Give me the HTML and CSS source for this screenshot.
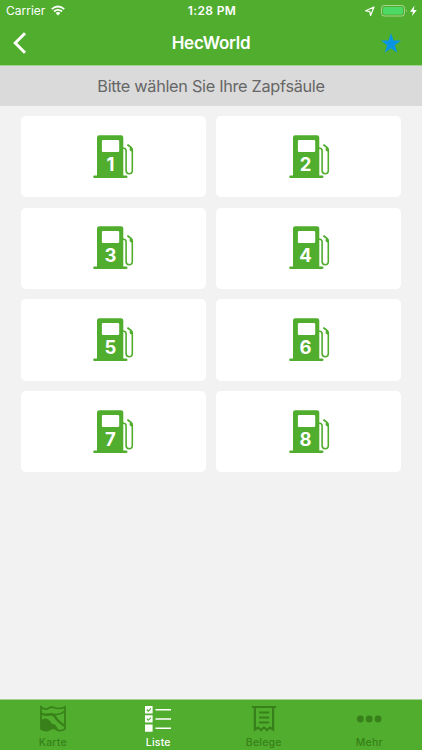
FILE: index.html
```html
<!DOCTYPE html>
<html lang="de">
<head>
<meta charset="utf-8">
<title>HecWorld</title>
<link rel="stylesheet" href="styles.css">
</head>
<body>
<svg width="0" height="0" class="defs">
  <symbol id="pump" viewBox="0 0 42 46">
    <path fill="currentColor" fill-rule="evenodd" d="M4 41.5V3.500Q4 1.200 6.300 1.200H28Q30.300 1.200 30.300 3.500V41.500H33.200Q34.500 41.500 34.500 42.800T33.200 44.100H1.500Q.2 44.100 .2 42.800T1.500 41.500ZM10 6Q8.900 6 8.900 7.100V16.900Q8.900 18 10 18H25Q26.200 18 26.200 16.900V7.100Q26.200 6 25 6Z"/>
    <path fill="none" stroke="currentColor" stroke-width="1.600" d="M30 14.300H30.800Q33.100 14.300 33.100 17V36.500Q33.100 39.700 36.200 39.700T39.300 36.500V16.500Q39.300 14.300 37.500 12.800L34.500 10.800"/>
    <path fill="currentColor" d="M34.900 10.100L39.200 13.800Q40.300 15 39.900 18L37 16.800Q36 15.500 37 13.500L34.200 11.500Z"/>
  </symbol>
</svg>
<header>
  <div class="status">
    <div class="carrier"><span>Carrier</span>
      <svg width="14" height="11" viewBox="0 0 15 11"><g fill="none" stroke="#fff" stroke-width="1.9"><path d="M.8 4Q7.500-1.600 14.200 4M3.200 6.600Q7.500 3 11.800 6.600"/></g><path fill="#fff" d="M5 8.200Q7.500 6.200 10 8.200L7.500 10.800Z"/></svg>
    </div>
    <div class="time">1:28 PM</div>
    <div class="power">
      <svg width="53" height="14" viewBox="0 0 53 14"><path d="M1.700 6.800L10 3L6.600 11.500L5.700 7.500Z" fill="none" stroke="#fff" stroke-width="1.200" stroke-linejoin="round"/><rect x="17.500" y="1.500" width="23" height="10.500" rx="2.600" fill="none" stroke="#a5d58f"/><rect x="19" y="3" width="20" height="7.500" rx="1.400" fill="#4cda64"/><path d="M42 5Q43.600 6.800 42 8.800Z" fill="#a5d58f"/><path d="M50.500 1.500L46 7.700H49L48 12L52.800 5.900H49.700Z" fill="#fff"/></svg>
    </div>
  </div>
  <div class="nav">
    <svg class="back" width="14" height="24" viewBox="0 0 14 24"><path d="M12 2.200L2.200 12L12 21.800" fill="none" stroke="#fff" stroke-width="3"/></svg>
    <h1>HecWorld</h1>
    <svg class="star" width="20" height="20" viewBox="0 0 20 20"><path fill="#0995e2" d="M10 0L12.500 7.500H20L14 12.200L16.200 19.800L10 15.200L3.800 19.800L6 12.200L0 7.500H7.500Z"/></svg>
  </div>
</header>
<div class="prompt"><span>Bitte wählen Sie Ihre Zapfsäule</span></div>
<main>
  <button class="card"><span class="pump"><svg><use href="#pump"/></svg><b>1</b></span></button>
  <button class="card"><span class="pump"><svg><use href="#pump"/></svg><b>2</b></span></button>
  <button class="card"><span class="pump"><svg><use href="#pump"/></svg><b>3</b></span></button>
  <button class="card"><span class="pump"><svg><use href="#pump"/></svg><b>4</b></span></button>
  <button class="card"><span class="pump"><svg><use href="#pump"/></svg><b>5</b></span></button>
  <button class="card"><span class="pump"><svg><use href="#pump"/></svg><b>6</b></span></button>
  <button class="card"><span class="pump"><svg><use href="#pump"/></svg><b>7</b></span></button>
  <button class="card"><span class="pump"><svg><use href="#pump"/></svg><b>8</b></span></button>
</main>
<footer>
  <a><svg width="26" height="28" viewBox="0 0 26 28"><path d="M1 2Q5 5.500 8 3.500T13.500 2.500T19 3.500T25 2V24Q20 27 16.500 24.500T9.500 24.500T1 24Z" fill="none" stroke="currentColor" stroke-width="1.700"/><path fill="currentColor" d="M1 15Q6 12 9 15T12 19Q16 18 18 25Q14 23 10 25T1 24Z"/><path d="M1 8.500Q5 10.500 9 9.500T15 11.500Q18 17 25 21" fill="none" stroke="currentColor" stroke-width="2.500"/><path d="M10 9Q20 11 24.500 6" fill="none" stroke="currentColor" stroke-width="1.500"/></svg><span>Karte</span></a>
  <a class="active"><svg width="26" height="28" viewBox="0 0 26 28"><path fill="currentColor" d="M0 1h7.600v7.400H0zM0 10.200h7.600v7.400H0zM0 19.400h7.600v7.400H0zM10.500 4h15.500v1.500H10.500zM10.500 13.200h15.500v1.500H10.500zM10.500 22.400h15.500v1.500H10.500z"/><path d="M1.800 4.500L3.300 6.100L5.900 3.400M1.800 13.700L3.300 15.300L5.900 12.600" fill="none" stroke="#50ad2e" stroke-width="1.100"/></svg><span>Liste</span></a>
  <a><svg width="26" height="28" viewBox="0 0 26 28"><path d="M.8 2H25.200M3.900 2V24.500L7 22.500L10 25L13 22.500L16 25L19 22.500L22.100 24.500V2" fill="none" stroke="currentColor" stroke-width="2.200"/><path d="M8 7.500H18.200M8 12.500H18.200M8 17.500H18.200" stroke="currentColor" stroke-width="2.200"/></svg><span>Belege</span></a>
  <a><svg width="26" height="28" viewBox="0 0 26 28"><g fill="currentColor"><circle cx="4.300" cy="14" r="3.400"/><circle cx="13.200" cy="14" r="3.400"/><circle cx="22.100" cy="14" r="3.400"/></g></svg><span>Mehr</span></a>
</footer>
</body>
</html>
```
FILE: styles.css
```css
* { box-sizing: border-box; }
body {
  margin: 0;
  height: 750px;
  display: flex;
  flex-direction: column;
  overflow: hidden;
  background: #f2f2f2;
  font-family: Inter, "Liberation Sans", sans-serif;
}
svg { display: block; }
.defs { position: absolute; }
header {
  height: 66px;
  background: #50ad2e;
  color: #fff;
  border-bottom: 1px solid #a4d292;
}
.status {
  height: 21px;
  display: grid;
  grid-template-columns: 1fr auto 1fr;
  align-items: center;
  padding: 0 5px 0 6px;
  font-size: 12px;
}
.carrier { display: flex; align-items: center; gap: 6px; }
.time { margin-right: -1px; font-weight: 600; letter-spacing: 0.35px; }
.power { justify-self: end; }
.nav {
  height: 43px;
  display: grid;
  grid-template-columns: 1fr auto 1fr;
  align-items: center;
  padding: 0 21px 0 13px;
}
h1 { margin: 0 -8px 0 0; font-size: 17px; font-weight: 600; letter-spacing: -0.25px; }
.star { justify-self: end; }
.prompt {
  height: 40px;
  background: #dadada;
  color: #666;
  display: flex;
  align-items: center;
  justify-content: center;
  font-size: 16.300px;
  letter-spacing: -0.3px;
}
main {
  flex: 1;
  display: grid;
  grid-template-columns: 1fr 1fr;
  grid-auto-rows: 81.300px;
  gap: 10.400px;
  padding: 10px 21px;
}
.card {
  border: 0;
  padding: 0 0 0 2px;
  border-radius: 5px;
  background: #fff;
  display: flex;
  align-items: center;
  justify-content: center;
  font-family: inherit;
}
.pump { display: grid; width: 42px; height: 46px; color: #50ad2e; }
.pump svg { grid-area: 1 / 1; width: 42px; height: 46px; }
.pump b {
  grid-area: 1 / 1;
  width: 34px;
  padding-top: 19px;
  line-height: 22px;
  font-size: 18.500px;
  font-weight: 700;
  color: #fff;
  text-align: center;
}
footer {
  height: 51px;
  display: grid;
  grid-template-columns: repeat(4, 1fr);
  background: #50ad2e;
  border-top: 1px solid #a4d292;
}
footer a {
  display: flex;
  flex-direction: column;
  align-items: center;
  padding-top: 5px;
  color: #388019;
  font-size: 10.500px;
  line-height: 13px;
  font-weight: 500;
  letter-spacing: 0.2px;
}
footer span { margin-top: 3px; }
footer .active { color: #fff; }
```
